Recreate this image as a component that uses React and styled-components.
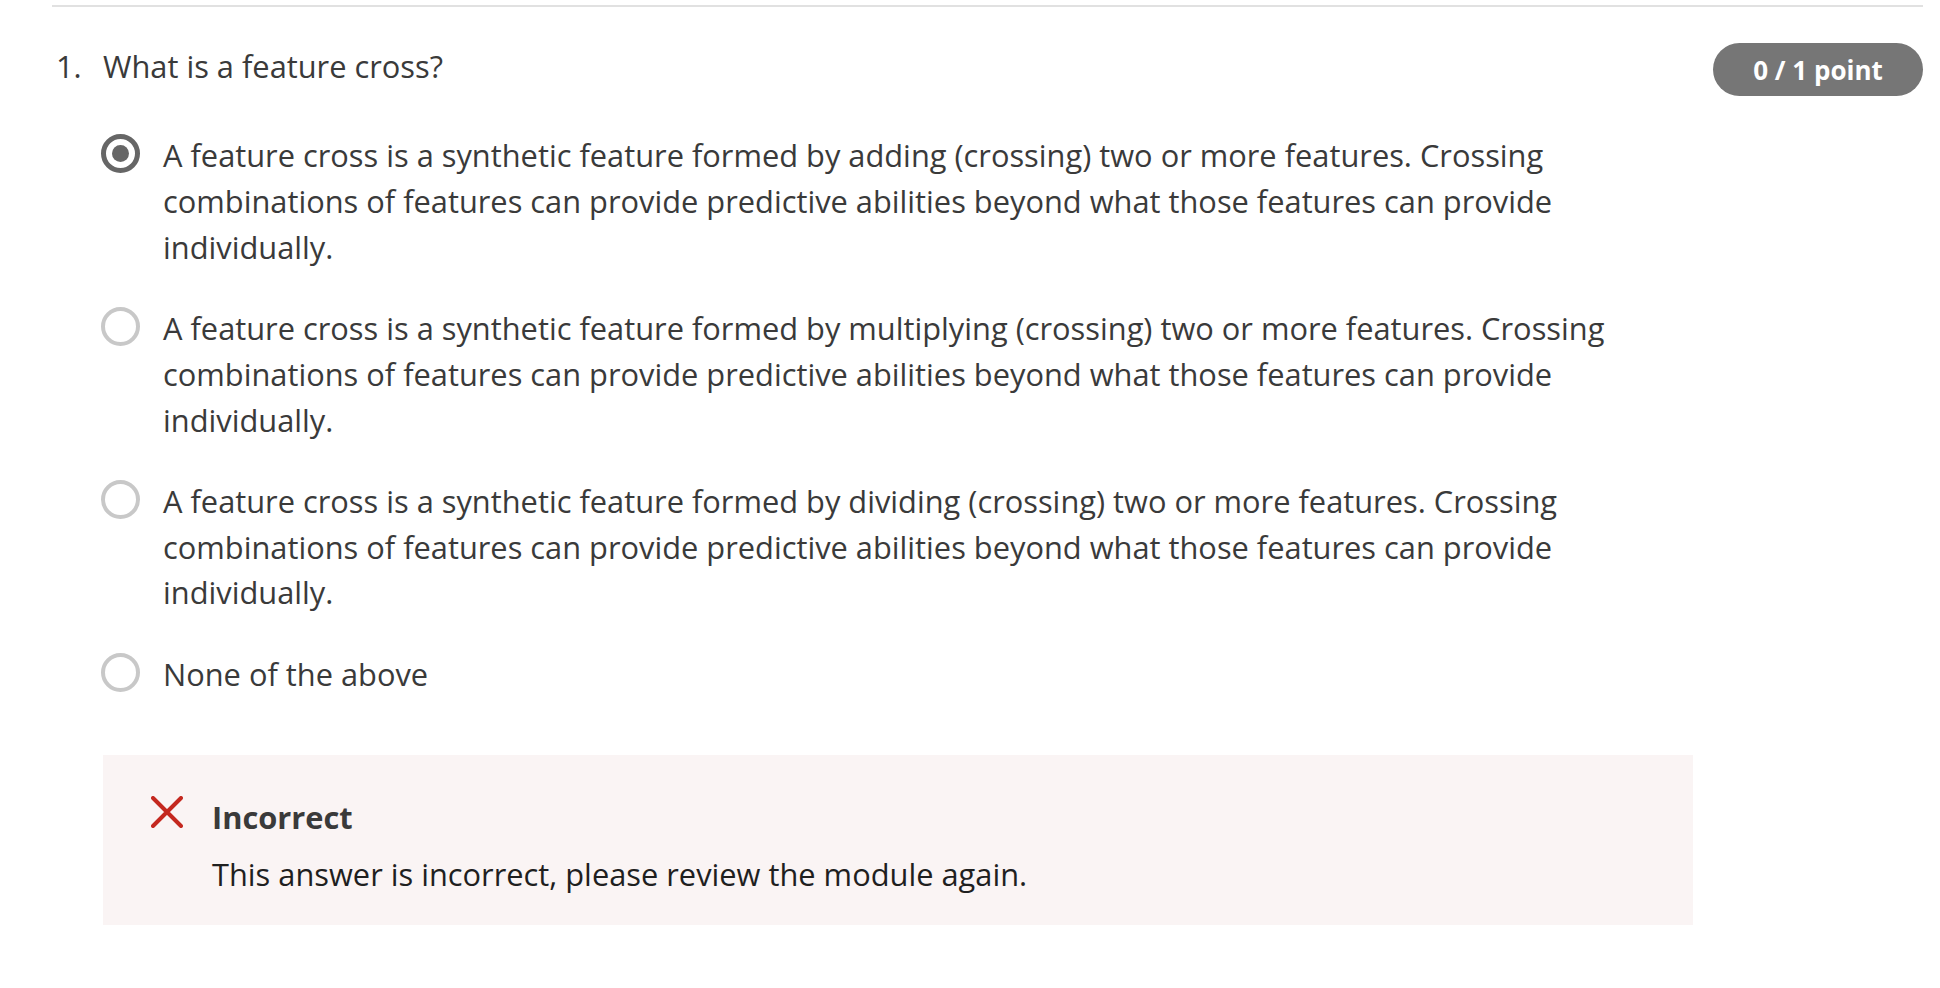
import React from 'react';
import styled, { createGlobalStyle } from 'styled-components';

const GlobalStyle = createGlobalStyle`
  body {
    margin: 0;
    background: #ffffff;
    font-family: "Open Sans", "Noto Sans", sans-serif;
    color: #3a3a3a;
  }
`;

const Page = styled.div`
  padding: 5px 17px 0 52px;
`;

const Question = styled.div`
  border-top: 2px solid #e1e1e1;
  padding-top: 37px;
`;

const Header = styled.div`
  display: flex;
  justify-content: space-between;
  align-items: flex-start;
`;

const Prompt = styled.div`
  display: flex;
  font-size: 30.8px;
  line-height: 45.8px;
`;

const Number = styled.span`
  width: 47px;
  padding-left: 4px;
`;

const Badge = styled.div`
  margin-top: -1px;
  width: 210px;
  height: 53px;
  border-radius: 27px;
  background: #767676;
  color: #ffffff;
  font-size: 26px;
  font-weight: 700;
  display: flex;
  align-items: center;
  justify-content: center;
`;

const Body = styled.div`
  padding-left: 51px;
  width: 1590px;
`;

const Options = styled.div`
  display: flex;
  flex-direction: column;
  gap: 35.4px;
  margin-top: 37.3px;
`;

const Option = styled.label`
  display: flex;
  align-items: flex-start;
  gap: 23px;
  font-size: 30.8px;
  line-height: 45.8px;
`;

const Radio = styled.span`
  flex: none;
  box-sizing: border-box;
  width: 39px;
  height: 39px;
  margin-left: -2px;
  margin-top: 1px;
  border-radius: 50%;
  border: ${p => (p.$checked ? '5px solid #666666' : '4px solid #c8c8c8')};
  display: flex;
  align-items: center;
  justify-content: center;

  &::after {
    content: '';
    display: ${p => (p.$checked ? 'block' : 'none')};
    width: 17px;
    height: 17px;
    border-radius: 50%;
    background: #666666;
  }
`;

const Feedback = styled.div`
  margin-top: 57.8px;
  background: #faf4f4;
  padding: 40px 48px 27px;
  display: flex;
  align-items: flex-start;
  gap: 29px;
`;

const FeedbackText = styled.div`
  font-size: 30.8px;
  line-height: 45.8px;
`;

const FeedbackTitle = styled.div`
  font-weight: 700;
  color: #3a3a3a;
`;

const FeedbackMessage = styled.div`
  margin-top: 11px;
  color: #1f1f1f;
`;

const CrossIcon = () => (
  <svg width="32" height="32" viewBox="0 0 32 32" style={{ flex: 'none', marginTop: 1 }}>
    <path d="M2 2 L30 30 M30 2 L2 30" stroke="#c4281f" strokeWidth="4" strokeLinecap="round" />
  </svg>
);

const options = [
  'A feature cross is a synthetic feature formed by adding (crossing) two or more features. Crossing combinations of features can provide predictive abilities beyond what those features can provide individually.',
  'A feature cross is a synthetic feature formed by multiplying (crossing) two or more features. Crossing combinations of features can provide predictive abilities beyond what those features can provide individually.',
  'A feature cross is a synthetic feature formed by dividing (crossing) two or more features. Crossing combinations of features can provide predictive abilities beyond what those features can provide individually.',
  'None of the above',
];

export default function App() {
  const selected = 0;
  return (
    <Page>
      <GlobalStyle />
      <Question>
        <Header>
          <Prompt>
            <Number>1.</Number>
            <span>What is a feature cross?</span>
          </Prompt>
          <Badge>0 / 1 point</Badge>
        </Header>
        <Body>
          <Options>
            {options.map((text, i) => (
              <Option key={i}>
                <Radio $checked={i === selected} />
                <span>{text}</span>
              </Option>
            ))}
          </Options>
          <Feedback>
            <CrossIcon />
            <FeedbackText>
              <FeedbackTitle>Incorrect</FeedbackTitle>
              <FeedbackMessage>This answer is incorrect, please review the module again.</FeedbackMessage>
            </FeedbackText>
          </Feedback>
        </Body>
      </Question>
    </Page>
  );
}
